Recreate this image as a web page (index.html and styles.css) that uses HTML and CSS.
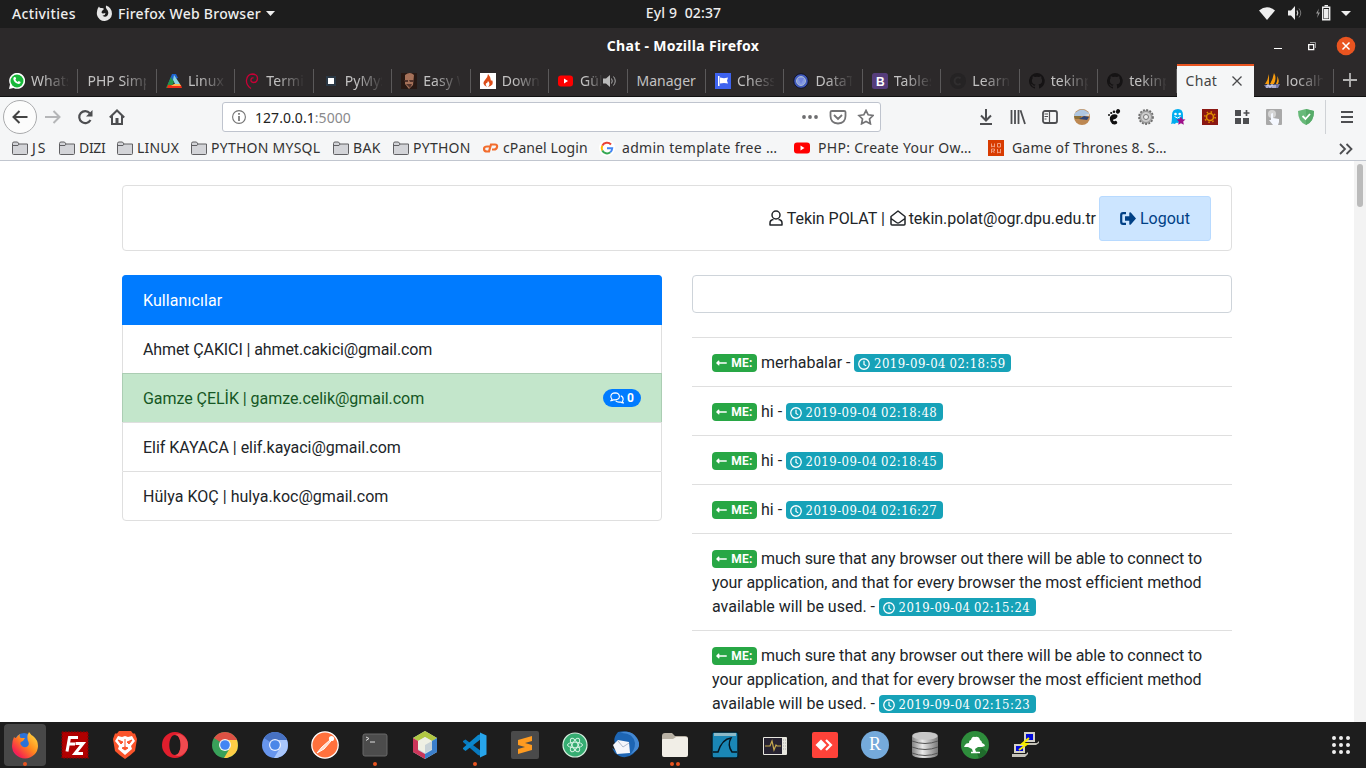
FILE: index.html
```html
<!DOCTYPE html>
<html lang="tr">
<head>
<meta charset="utf-8">
<title>Chat</title>
<link rel="stylesheet" href="styles.css">
</head>
<body>
<svg width="0" height="0" class="defs">
  <symbol id="folder" viewBox="0 0 16 14"><path d="M.5 12.500v-10q0-1.500 1.500-1.500h3.500l1.500 2h8.500v9.500q0 1-1 1h-13q-1 0-1-1z" fill="#d3d4d8" stroke="#606063"/><path d="M1 4.500h5l1-1.500" fill="none" stroke="#606063"/></symbol>
  <symbol id="arrow" viewBox="0 0 448 512"><path fill="currentColor" d="M134 220h302c7 0 12 5 12 12v48c0 7-5 12-12 12H134v46c0 22-26 33-41 17L7 273c-9-9-9-25 0-34l86-86c15-15 41-4 41 17z"/></symbol>
  <symbol id="clock" viewBox="0 0 16 16"><circle cx="8" cy="8" r="7" fill="none" stroke="currentColor" stroke-width="1.700"/><path d="M8 3.700V8.500l3 2" fill="none" stroke="currentColor" stroke-width="1.600"/></symbol>
  <symbol id="github" viewBox="0 0 16 16"><path fill="#151314" d="M8 0a8 8 0 0 0-2.500 15.600c.4.1.5-.2.5-.4v-1.500c-2.200.5-2.700-1-2.700-1-.4-.9-.9-1.200-.9-1.200-.7-.5.1-.5.1-.5.8.1 1.200.8 1.200.8.7 1.300 1.900.9 2.300.7.1-.5.3-.9.5-1.100-1.800-.2-3.600-.9-3.600-4 0-.9.3-1.600.8-2.100-.1-.2-.4-1 .1-2.100 0 0 .7-.2 2.200.8a7.600 7.600 0 0 1 4 0c1.500-1 2.200-.8 2.200-.8.4 1.100.2 1.900.1 2.100.5.6.8 1.300.8 2.200 0 3.100-1.900 3.700-3.700 3.900.3.300.6.800.6 1.500v2.200c0 .2.100.5.500.4A8 8 0 0 0 8 0z"/></symbol>
</svg>

<header class="topbar">
  <div class="top-left">
    <span class="activities">Activities</span>
    <svg class="fx" width="17" height="17" viewBox="0 0 17 17"><path d="M3 1.500Q3.500 3 5 3Q7 2.500 8 4L6 6Q4.800 8 7 8.500L9.500 8Q9 11 6.500 10.500Q9 13 11.500 10.500Q13.500 7 10.500 4Q9.500 2.500 10 .5Q16 2.500 16 9A7.600 7.600 0 0 1 1 10Q.3 5 3 1.500z" fill="#e6e6e6"/></svg>
    <span class="app">Firefox Web Browser</span>
    <svg width="9" height="5" viewBox="0 0 9 5"><path d="M0 0h9L4.500 5z" fill="#eee"/></svg>
  </div>
  <div class="top-date">Eyl 9&nbsp; 02:37</div>
  <div class="top-right">
    <svg width="16" height="13" viewBox="0 0 16 13"><path d="M0 3.500Q8-3 16 3.500L8 13z" fill="#eee"/></svg>
    <svg class="vol" width="16" height="14" viewBox="0 0 16 14"><path d="M1 4.500h3L8 0v14L4 9.500H1z" fill="#eee"/><path d="M10 4.500q1.500 2.500 0 5" stroke="#ccc" stroke-width="1.300" fill="none"/><path d="M12 2.500q3.500 4.500 0 9" stroke="#777" fill="none"/></svg>
    <svg class="bat" width="15" height="16" viewBox="0 0 15 16"><path d="M3 3.500L0 8.500h2L1 13l3-5.500H2z" fill="#999"/><path d="M6.700 2.200h7v12.600h-7z" fill="none" stroke="#eee" stroke-width="1.400"/><path d="M8 4h4.500v9.500H8zM8.500 0h3.500v1.500h-3.500z" fill="#eee"/></svg>
    <svg width="10" height="5" viewBox="0 0 10 5"><path d="M0 0h10L5 5z" fill="#eee"/></svg>
  </div>
</header>

<div class="titlebar">
  <div class="title">Chat - Mozilla Firefox</div>
  <svg class="winbtns" width="84" height="20" viewBox="0 0 84 20"><path d="M1 12.500h8" stroke="#fff"/><path d="M35.700 8.700h5v5h-5z" fill="none" stroke="#fff" stroke-width="1.300"/><path d="M37 6.500h5.500V12" fill="none" stroke="#999"/><circle cx="73" cy="10" r="9.300" fill="#e95420"/><path d="M69.500 6.500l7 7m0-7l-7 7" stroke="#fff" stroke-width="1.500"/></svg>
</div>

<div class="tabs">
  <div class="tab"><svg class="fav" viewBox="0 0 16 16"><path d="M0 16l1-4.500A8 8 0 1 1 4.500 15z" fill="#fff"/><circle cx="8" cy="8" r="6.500" fill="#18b83a"/><path d="M5.300 4l1.300.3.500 1.500-.7 1q.8 1.500 2.300 2.200l1-.9 2 1q0 2-2.200 2Q5 10 4.300 6 4.300 4.500 5.300 4z" fill="#fff"/></svg><span>WhatsApp</span></div>
  <div class="tab"><span class="wide">PHP Simple</span></div>
  <div class="tab"><svg class="fav" viewBox="0 0 16 16"><path d="M6 1h4l2 4-3 1-4 4-3 1z" fill="#1c62cd"/><path d="M8 2l6 9H9l-2-4z" fill="#8bd4e3"/><path d="M5 4l3 5-3 6H0z" fill="#269447"/><path d="M2 12h13l1 3H1z" fill="#f02b16"/><path d="M8 11h6l1 2H5z" fill="#ffb34b"/></svg><span>Linux M</span></div>
  <div class="tab"><svg class="fav" viewBox="0 0 16 16"><path d="M7 15.500Q2 12 2.500 7 3.500 1 8.500 1q5 .2 5 4.800Q13 9.500 9.500 9.500 6.500 9 7 6.500 7.500 4.500 9.500 5" stroke="#c70036" stroke-width="1.300" fill="none"/></svg><span>Termina</span></div>
  <div class="tab"><svg class="fav" viewBox="0 0 16 16"><path d="M3 3h10v10H3z" fill="#2b3946"/><path d="M5 5h6v6H5z" fill="#fff"/></svg><span>PyMySQL</span></div>
  <div class="tab"><svg class="fav" viewBox="0 0 16 16"><path d="M0 0h16v16H0z" fill="#281914"/><path d="M4 2q5-4 9 0l-1 10-4 4-4-5z" fill="#a67159"/><path d="M3 7h4v2H4zm5 0h5v2H9zM5 11h6l-2 4z" fill="#51332b"/></svg><span>Easy Way</span></div>
  <div class="tab"><svg class="fav" viewBox="0 0 16 16"><path d="M0 0h16v16H0z" fill="#fff"/><path d="M8 1q0 3-3 6-4 4 2 7-2-2-1-4 1 1 2-2 3 3 0 6 7-2 4-7l-1 1Q11 4 8 1z" fill="#dc4c19"/></svg><span>Download</span></div>
  <div class="tab"><svg class="fav" viewBox="0 0 16 16"><rect y="2.500" width="15" height="11" rx="3" fill="#f00"/><path d="M6 5.500v5L10 8z" fill="#fff"/></svg><span class="short">Gülş</span><svg class="sound" width="14" height="14" viewBox="0 0 14 14"><path d="M0 4.500h3L7 1v12L3 9.500H0z" fill="#bbb"/><path d="M8.500 4.500q1.500 2.500 0 5m2-7q3.500 4.500 0 9" stroke="#aaa" fill="none"/></svg></div>
  <div class="tab"><span class="wide full">Manager</span></div>
  <div class="tab"><svg class="fav" viewBox="0 0 16 16"><path d="M0 0h16v16H0z" fill="#3e63ef"/><path d="M3 3h1.500v10H3zm2 1.500l4 .7 4-.7-1 3.300 1 2.700-4-.5-4 .5z" fill="#fff"/></svg><span>Chess A</span></div>
  <div class="tab"><svg class="fav" viewBox="0 0 16 16"><circle cx="8" cy="8" r="7.300" fill="#4059bb" stroke="#101223"/><circle cx="8" cy="8" r="4.500" fill="#849ae5" stroke="#abc" /><path d="M5 5h6L8 11z" fill="#6f83dc"/></svg><span>DataTabl</span></div>
  <div class="tab"><svg class="fav" viewBox="0 0 16 16"><rect width="16" height="16" rx="2.500" fill="#563d7c"/><text x="4" y="12.500" class="bicon">B</text></svg><span>Tables·</span></div>
  <div class="tab"><svg class="fav" viewBox="0 0 16 16"><circle cx="8" cy="8" r="8" fill="#252324"/><path d="M10.500 5.500a3.500 3.500 0 1 0 0 5" stroke="#302e2f" stroke-width="2" fill="none"/></svg><span>Learn M</span></div>
  <div class="tab"><svg class="fav"><use href="#github"/></svg><span>tekinpo</span></div>
  <div class="tab"><svg class="fav"><use href="#github"/></svg><span>tekinpo</span></div>
  <div class="tab active"><span class="wide">Chat</span><svg class="close" width="10" height="10" viewBox="0 0 10 10"><path d="M.5.5l9 9m0-9l-9 9" stroke="#4a4a4d" stroke-width="1.300"/></svg></div>
  <div class="tab"><svg class="fav" viewBox="0 0 16 16"><path d="M5 1v10H1q3-4 4-10zm5-1q3 5 0 11H6q3-5 4-11zm3 3q3 4 1 8h-2q2-4 1-8z" fill="#f89c0e"/><path d="M0 12l16-1-2 4H2z" fill="#777baa"/><path d="M3 15v-3h2v2h2v-2h2v3m2-3v3" stroke="#dfe1f3" fill="none"/></svg><span>localho</span></div>
  <svg class="plus" width="14" height="14" viewBox="0 0 14 14"><path d="M7 0v14M0 7h14" stroke="#b5b4b4" stroke-width="1.800"/></svg>
</div>

<nav class="toolbar">
  <div class="navrow">
    <div class="back"><svg width="16" height="14" viewBox="0 0 16 14"><path d="M15.500 7H1.500M7.500 1l-6 6 6 6" stroke="#444" stroke-width="2" fill="none"/></svg></div>
    <svg class="fwd" width="16" height="14" viewBox="0 0 16 14"><path d="M0 7h14.500M8.500 1l6 6-6 6" stroke="#b5b6b8" stroke-width="2" fill="none"/></svg>
    <svg class="reload" width="16" height="16" viewBox="0 0 16 16"><path d="M12.800 4.200A6 6 0 1 0 13.500 11" stroke="#4d4e51" stroke-width="2.200" fill="none"/><path d="M15.500 1v6.500H9z" fill="#4d4e51"/></svg>
    <svg class="home" width="16" height="16" viewBox="0 0 16 16"><path d="M.8 8.500L8 1.500l7.200 7M3 7v8h10V7" stroke="#4d4e51" stroke-width="2" fill="none"/><path d="M6.500 9h3v6h-3z" fill="#4d4e51"/></svg>
    <div class="urlbar">
      <svg width="14" height="14" viewBox="0 0 14 14"><circle cx="7" cy="7" r="6.400" fill="none" stroke="#737373" stroke-width="1.100"/><path d="M7 6v5M7 3v1.800" stroke="#737373" stroke-width="1.700"/></svg>
      <span class="url">127.0.0.1<i>:5000</i></span>
      <svg class="page-actions" width="74" height="16" viewBox="0 0 74 16"><g fill="#6d6d6f"><circle cx="4" cy="8" r="1.900"/><circle cx="10" cy="8" r="1.900"/><circle cx="16" cy="8" r="1.900"/></g><path d="M32 2h12q1.500 0 1.500 1v4q0 7-7.500 7.500Q30.500 14 30.500 7V3q0-1 1.500-1zM34 6l4 4 4-4" stroke="#737375" stroke-width="1.800" fill="none"/><path d="M66 1.500l2.200 4.300 4.800.7-3.500 3.500.9 4.800-4.400-2.300-4.400 2.300.9-4.800L59 6.500l4.800-.7z" stroke="#737375" stroke-width="1.700" fill="none"/></svg>
    </div>
    <div class="tools">
      <svg class="t" viewBox="0 0 16 16"><path d="M8 0v11M3 6.500l5 5 5-5M2 15h12" stroke="#4d4e51" stroke-width="2" fill="none"/></svg>
      <svg class="t" viewBox="0 0 16 16"><path d="M1.500 1v14M5 1v14M8.500 1v14M10.500 1.200L15 15" stroke="#4d4e51" stroke-width="1.800" fill="none"/></svg>
      <svg class="t" viewBox="0 0 16 16"><rect x="1" y="2" width="14" height="12" rx="2" stroke="#4d4e51" stroke-width="1.800" fill="none"/><path d="M7.500 2v12M2.500 5h3.500M2.500 7.500h3.500M2.500 10h2" stroke="#4d4e51" stroke-width="1.200"/></svg>
      <svg class="t" viewBox="0 0 16 16"><circle cx="8" cy="8" r="8" fill="#bd8852"/><path d="M1 4q7-7 14 0v3H0z" fill="#aec6e1"/><path d="M0 7h7v3H1z" fill="#8b6f37"/><path d="M5 10l5-3 5 1-2 3z" fill="#304575"/><path d="M10 6l5-1v2z" fill="#e9ded0"/></svg>
      <svg class="t" viewBox="0 0 16 16"><path d="M11.500 6.500Q10 4.500 6.500 5.500 2.500 7.500 4.500 12.500 6 16 9 15.500q3-.7 2-2.700-1-1.500-2.800-.6-1.700-.2-.9-1.700 4.400-1 4.200-4z" fill="#111"/><ellipse cx="12" cy="2.400" rx="2" ry="2.300" transform="rotate(25 12 2.400)" fill="#111"/><circle cx="8" cy="2.800" r="1.300" fill="#111"/><circle cx="5.200" cy="4" r="1.100" fill="#111"/><circle cx="3" cy="6" r="1" fill="#111"/></svg>
      <svg class="t" viewBox="0 0 16 16"><circle cx="8" cy="8" r="7" fill="#b5b5b5" stroke="#6d6d6d" stroke-width="1.800" stroke-dasharray="1.900 1.400"/><circle cx="8" cy="8" r="5.500" fill="#ccc" stroke="#929292"/><circle cx="8" cy="8" r="2.500" fill="#eee" stroke="#777"/></svg>
      <svg class="t" viewBox="0 0 16 16"><path d="M2 6q0-6 6-6 5 0 5 6v9q-4-3-5-1-2-1-3 1-2-1-4 0 1-2 1-9z" fill="#00aef0"/><circle cx="5.500" cy="5" r="1.300" fill="#fff"/><circle cx="9.700" cy="5" r="1.300" fill="#fff"/><path d="M4.500 7.500q3 3 6 0" stroke="#fff" fill="none"/><path d="M11 7.500l1.300 2.800 3.200.3-2.300 2 .7 3.200-2.900-1.600-2.800 1.600.6-3.200-2.300-2 3.100-.3z" fill="#a0108a"/></svg>
      <svg class="t" viewBox="0 0 16 16"><path d="M0 0h16v16H0z" fill="#8b1813"/><circle cx="8" cy="8" r="3.500" fill="none" stroke="#df8d00" stroke-width="1.600"/><circle cx="8" cy="8" r="5.200" fill="none" stroke="#df8d00" stroke-width="1.600" stroke-dasharray="1.500 2.580"/></svg>
      <svg class="t" viewBox="0 0 16 16"><path d="M1 1h6v6H1zm0 8h6v6H1zm8 0h6v6H9z" fill="#4d4e51"/><path d="M12.500 1v6m-3-3h6" stroke="#4d4e51" stroke-width="1.700"/></svg>
      <svg class="t" viewBox="0 0 16 16"><rect width="16" height="16" rx="1" fill="#a9a9a9"/><circle cx="6" cy="5" r="4" fill="#d4d4d4"/><path d="M5 5q2-2 2 0v4l6 1v3l-1 3H7l-4-5 2 0z" fill="#f5f8ff"/></svg>
      <svg class="t" viewBox="0 0 16 16"><path d="M8 0l8 2q0 11-8 14Q0 13 0 2z" fill="#67b979"/><path d="M8 0l8 2q0 11-8 14z" fill="#57ab69"/><path d="M4.500 7l3 3 4.500-5" stroke="#fff" stroke-width="1.800" fill="none"/></svg>
    </div>
    <div class="burger"><svg width="12" height="12" viewBox="0 0 12 12"><path d="M0 1h12M0 6h12M0 11h12" stroke="#4d4e51" stroke-width="1.800"/></svg></div>
  </div>
  <div class="bookmarks">
    <span class="bm w47"><svg class="folder"><use href="#folder"/></svg><b class="f0">JS</b></span>
    <span class="bm w58"><svg class="folder"><use href="#folder"/></svg><b class="f1">DIZI</b></span>
    <span class="bm w74"><svg class="folder"><use href="#folder"/></svg><b class="f2">LINUX</b></span>
    <span class="bm w142"><svg class="folder"><use href="#folder"/></svg><b class="f3">PYTHON MYSQL</b></span>
    <span class="bm w60"><svg class="folder"><use href="#folder"/></svg><b class="f4">BAK</b></span>
    <span class="bm w90"><svg class="folder"><use href="#folder"/></svg><b class="f5">PYTHON</b></span>
    <span class="bm w116"><svg class="site" viewBox="0 0 16 16"><path d="M7 6.500H4Q1 6.500 1 9t3 2.500h2L8 4.500h4q2.500 0 2 2.500t-3 2.500H9" stroke="#f26d2e" stroke-width="2.200" fill="none"/></svg><b class="f6">cPanel Login</b></span>
    <span class="bm gap w195"><svg class="site" viewBox="0 0 16 16"><circle cx="8" cy="8" r="8" fill="#fff"/><path d="M12 4.500A5.200 5.200 0 0 0 3.300 5.700" stroke="#ea4335" stroke-width="2" fill="none"/><path d="M3.300 5.700a5.200 5.200 0 0 0 0 4.800" stroke="#fbbc05" stroke-width="2" fill="none"/><path d="M3.300 10.500a5.200 5.200 0 0 0 8 1.700" stroke="#34a853" stroke-width="2" fill="none"/><path d="M11.300 12.200Q13 11 13.200 8.300H8" stroke="#4285f4" stroke-width="2" fill="none"/></svg><b class="f7">admin template free …</b></span>
    <span class="bm gap w194"><svg class="site" viewBox="0 0 16 16"><rect x="0" y="2.500" width="16" height="11" rx="3" fill="#f00"/><path d="M6.500 5.500v5l4-2.500z" fill="#fff"/></svg><b class="f8">PHP: Create Your Ow…</b></span>
    <span class="bm gap"><svg class="site" viewBox="0 0 16 16"><path d="M0 0h16v16H0z" fill="#d83b01"/><path d="M3.500 3.500V7l1.500-1 1.500 1V3.500m3 0h3V7h-3zM3.500 13V9h3v2l-2 0 2 2m3-4v4l1.500-1 1.500 1V9" stroke="#f4a88f" stroke-width=".9" fill="none"/></svg><b class="f9">Game of Thrones 8. S…</b></span>
    <svg class="more" width="14" height="12" viewBox="0 0 14 12"><path d="M1 1l5 5-5 5m6.500-10l5 5-5 5" stroke="#4d4e51" stroke-width="1.800" fill="none"/></svg>
  </div>
</nav>

<main class="page">
  <div class="container">
    <div class="userbar">
      <span class="who"><svg class="ic-user" viewBox="0 0 14 16"><path d="M4.500 9.500Q1 10 1 13v2h12v-2q0-3-3.500-3.500" fill="none" stroke="currentColor" stroke-width="1.500" stroke-linejoin="round"/><circle cx="7" cy="5" r="4" fill="none" stroke="currentColor" stroke-width="1.500"/></svg> Tekin POLAT | <svg class="ic-mail" viewBox="0 0 16 16"><path d="M1 6.500L8 1l7 5.500V14q0 1-1 1H2q-1 0-1-1zM1 8.500l5.500 4q1.500 1 3 0l5.500-4" fill="none" stroke="currentColor" stroke-width="1.500" stroke-linejoin="round"/></svg> tekin.polat@ogr.dpu.edu.tr</span>
      <a class="logout"><svg class="ic-out" viewBox="0 0 16 13"><path d="M6 1.200H3q-1.800 0-1.800 1.800v7q0 1.800 1.800 1.800h3" fill="none" stroke="currentColor" stroke-width="2.200"/><path d="M5 4.300h4.300V.8q.5-1 1.500-.3L16 6.500l-5.200 6q-1 .6-1.500-.3V8.700H5z" fill="currentColor"/></svg> Logout</a>
    </div>
    <div class="cols">
      <ul class="users">
        <li class="head">Kullanıcılar</li>
        <li class="tight">Ahmet ÇAKICI | ahmet.cakici@gmail.com</li>
        <li class="sel">Gamze ÇELİK | gamze.celik@gmail.com<span class="pill"><svg class="ic-chat" viewBox="0 0 18 16"><path d="M1 11.500Q2.500 10 2 9 .8 7.500.8 6 1 1.500 6.500 1.200 12 1.500 12.200 6 12 10.300 6.500 10.500L4.500 10.300Q3 11.500 1 11.500zM14 5.200q3.200 1 3.200 4.300 0 1.500-1 2.700 0 1 1.300 2.300-2.200 0-3.700-1.200-4.500.8-6.500-1.500" fill="none" stroke="currentColor" stroke-width="1.500"/></svg> 0</span></li>
        <li class="mid">Elif KAYACA | elif.kayaci@gmail.com</li>
        <li>Hülya KOÇ | hulya.koc@gmail.com</li>
      </ul>
      <section class="chat">
        <input class="msg" type="text">
        <ul class="log">
          <li><span class="me"><svg><use href="#arrow"/></svg> ME:</span> merhabalar - <span class="time"><svg><use href="#clock"/></svg> 2019-09-04 02:18:59</span></li>
          <li><span class="me"><svg><use href="#arrow"/></svg> ME:</span> hi - <span class="time"><svg><use href="#clock"/></svg> 2019-09-04 02:18:48</span></li>
          <li><span class="me"><svg><use href="#arrow"/></svg> ME:</span> hi - <span class="time"><svg><use href="#clock"/></svg> 2019-09-04 02:18:45</span></li>
          <li><span class="me"><svg><use href="#arrow"/></svg> ME:</span> hi - <span class="time"><svg><use href="#clock"/></svg> 2019-09-04 02:16:27</span></li>
          <li><span class="me"><svg><use href="#arrow"/></svg> ME:</span> <span class="long">much sure that any browser out there will be able to connect to your application, and that for every browser the most efficient method </span>available will be used. - <span class="time"><svg><use href="#clock"/></svg> 2019-09-04 02:15:24</span></li>
          <li><span class="me"><svg><use href="#arrow"/></svg> ME:</span> <span class="long">much sure that any browser out there will be able to connect to your application, and that for every browser the most efficient method </span>available will be used. - <span class="time"><svg><use href="#clock"/></svg> 2019-09-04 02:15:23</span></li>
        </ul>
      </section>
    </div>
  </div>
  <div class="scroll"><div class="thumb"></div></div>
</main>

<footer class="dock">
  <div class="app-slot on one"><svg viewBox="0 0 28 28"><defs><linearGradient id="ff" x1="1" y1="0" x2="0" y2="1"><stop offset="0" stop-color="#ffe94a"/><stop offset=".45" stop-color="#ff8a1c"/><stop offset=".8" stop-color="#f5234f"/><stop offset="1" stop-color="#d91ca0"/></linearGradient></defs><circle cx="13" cy="11.500" r="9.500" fill="#2b72d8"/><path d="M3 6q1 1 2 1 2-3 4-4-1 3 1 4h4l-2 3q-4 1-2 4 3 4 7 1 1.500-2 .5-4-2.500-5 .5-10 2 3 4 4 5 4 5 10A13 12.500 0 0 1 1 15Q1 10 3 6z" fill="url(#ff)"/></svg></div>
  <div class="app-slot"><svg viewBox="0 0 28 28"><path d="M1 1h26v26H1z" fill="#b00000" stroke="#850000" stroke-width="1.500" stroke-dasharray="1.500 1.500"/><path d="M6 20.500L8.500 6.500H17M7.500 13H14M14.500 12.500H22L14 22.500h8" fill="none" stroke="#fff" stroke-width="3"/></svg></div>
  <div class="app-slot"><svg viewBox="0 0 28 28"><path d="M8 0h12l2 2.500h2L26 8l-2 12q-4 4-10 8-6-4-10-8L2 8l2-5.500h2z" fill="#fb542b"/><path d="M7 5l4 1 3-1 3 1 4-1 3 5-4 5 1 3-7 6-7-6 1-3-4-5z" fill="#fff"/><path d="M7 9l5 2-2 2zM21 9l-5 2 2 2zM11 17l3-1 3 1-3 2zM14 8v8" fill="#fb542b" stroke="#fb542b"/></svg></div>
  <div class="app-slot"><svg viewBox="0 0 28 28"><path fill-rule="evenodd" d="M14 1a13 13 0 1 1 0 26 13 13 0 0 1 0-26zm0 3c-7.500 0-7.500 20 0 20s7.500-20 0-20z" fill="#e11e2d"/><path d="M14 4c7.500 0 7.500 20 0 20q3 2 7 0 6-4 6-10t-6-10q-4-2-7 0z" fill="#f04a4f"/></svg></div>
  <div class="app-slot"><svg viewBox="0 0 28 28"><circle cx="14" cy="14" r="13" fill="#39a15a"/><path d="M14 14L3 7q4-6 11-6t11 6q1 1 1 2H14z" fill="#dd5144"/><path d="M14 9h12q4 14-10 18h-3l6-10z" fill="#ffcd46"/><circle cx="14" cy="14" r="6" fill="#f3f3f3"/><circle cx="14" cy="14" r="4.800" fill="#4285f4"/></svg></div>
  <div class="app-slot"><svg viewBox="0 0 28 28"><circle cx="14" cy="14" r="13" fill="#6795ed"/><path d="M14 14L3 7q4-6 11-6t11 6q1 1 1 2H14z" fill="#4771c2"/><path d="M14 9h12q4 14-10 18h-3l6-10z" fill="#a9c6fb"/><circle cx="14" cy="14" r="6" fill="#e9f0ff"/><circle cx="14" cy="14" r="4.800" fill="#4b87e8"/></svg></div>
  <div class="app-slot"><svg viewBox="0 0 28 28"><circle cx="14" cy="14" r="13.200" fill="#ff713d" stroke="#fff" stroke-width="1.300"/><path d="M19 9l-8 7-5 6 7-4 7-8" fill="#ffd8c8" stroke="#fff"/><circle cx="20.500" cy="7.500" r="2.600" fill="#fff"/></svg></div>
  <div class="app-slot one"><svg viewBox="0 0 28 28"><rect x="2" y="3" width="24" height="22" rx="2" fill="#4c4c4c" stroke="#696969"/><path d="M5 6l3 1.500L5 9.500M9 11h5" stroke="#ddd" fill="none"/></svg></div>
  <div class="app-slot"><svg viewBox="0 0 28 28"><path d="M14 0l12 7v14l-12 7-12-7V7z" fill="#c6d9e3"/><path d="M14 0l12 7-5 3-7-4-7 4-5-3z" fill="#b1c843"/><path d="M2 7l5 3v9l7 4v5L2 21z" fill="#cb365a"/><path d="M26 7v14l-12 7v-5l7-4v-9z" fill="#3b7fcb"/><path d="M14 6l7 4v8l-7 4-7-4v-8z" fill="#eef0e3"/><path d="M14 14l7-4v8l-7 4z" fill="#c7d2d6"/></svg></div>
  <div class="app-slot one"><svg viewBox="0 0 28 28"><path d="M2 10l2.500-1.500L20 20v5l-3-1L2 11z" fill="#087abf"/><path d="M2 18l2.500 2L20 8V3l-3 1L2 17z" fill="#0b87cc"/><path d="M19 1.500l6.500 3v19l-6.500 3z" fill="#27a5eb"/></svg></div>
  <div class="app-slot"><svg viewBox="0 0 28 28"><rect width="28" height="28" rx="2" fill="#4a4a4a"/><path d="M7 9l14-4v5l-7 2 7 2v5L7 23v-5l7-2-7-2z" fill="#ff9b20"/></svg></div>
  <div class="app-slot"><svg viewBox="0 0 28 28"><circle cx="14" cy="14" r="12" fill="#36ad72" stroke="#d6eedf" stroke-width="1.200"/><g fill="none" stroke="#d5f3e4"><ellipse cx="14" cy="14" rx="7.500" ry="2.800"/><ellipse cx="14" cy="14" rx="7.500" ry="2.800" transform="rotate(60 14 14)"/><ellipse cx="14" cy="14" rx="7.500" ry="2.800" transform="rotate(120 14 14)"/></g></svg></div>
  <div class="app-slot"><svg viewBox="0 0 28 28"><path d="M7 1q13-3 18 6 4 9-3 16-9 7-18-1l-3-5 5 3-3-5 3 1Q0 9 7 1z" fill="#1d65b3"/><path d="M9 2q13-1 15 10 0 8-6 12 15-6 8-17-6-9-17-5z" fill="#4388d3"/><path d="M2 14l5-5 11 2 1 11-13 1z" fill="#f4f6fb"/><path d="M7 10l5 6 6-4" stroke="#adb9cb" fill="none"/></svg></div>
  <div class="app-slot two"><svg viewBox="0 0 28 28"><path d="M1 5q0-3 3-3h7l3 3h10q3 0 3 3v5H1z" fill="#b8b1a4"/><path d="M1 9q0-1 1-1h10l3-2h10q2 0 2 2v16q0 2-2 2H3q-2 0-2-2z" fill="#f1eee7"/></svg></div>
  <div class="app-slot"><svg viewBox="0 0 28 28"><rect x="1" y="1" width="26" height="26" rx="2" fill="#1a87b6" stroke="#091c25" stroke-width="1.500"/><path d="M3 2h22v3H3z" fill="#8dbac8"/><path d="M2 21h5q4-13 13-14-4 7 1 14h5" stroke="#061721" stroke-width="1.500" fill="none"/></svg></div>
  <div class="app-slot"><svg viewBox="0 0 28 28"><rect x="2" y="6" width="24" height="18" rx="1" fill="#e8e7df"/><path d="M3 7h18v16H3z" fill="#272331"/><path d="M4 15h5l2-5 2 9 2-5 1 1h4" stroke="#c6a94f" stroke-width="1.200" fill="none"/><path d="M22 9h3m-3 3h3m-3 3h3m-3 3h3" stroke="#aaa" stroke-dasharray="1 1"/></svg></div>
  <div class="app-slot"><svg viewBox="0 0 28 28"><rect x="1" y="1" width="26" height="26" rx="2" fill="#ff4239"/><path d="M4.500 14l5.500-5.500 5.500 5.500-5.500 5.500z" fill="#fff"/><path d="M15 9l5 5-5 5" stroke="#fff" stroke-width="2.200" fill="none"/></svg></div>
  <div class="app-slot"><svg viewBox="0 0 28 28"><circle cx="14" cy="14" r="14" fill="#75aadb"/><text x="8" y="19" class="ricon">R</text></svg></div>
  <div class="app-slot"><svg viewBox="0 0 28 28"><defs><linearGradient id="dbg"><stop stop-color="#828282"/><stop offset=".4" stop-color="#e9e9e9"/><stop offset="1" stop-color="#777"/></linearGradient></defs><path d="M1 5q0-4 13-4t13 4v18q0 4-13 4T1 23z" fill="url(#dbg)"/><ellipse cx="14" cy="5" rx="12.500" ry="3.800" fill="#c7c7c7"/><path d="M1 10q13 5 26 0M1 16q13 5 26 0M1 22q13 5 26 0" stroke="#555" fill="none"/></svg></div>
  <div class="app-slot"><svg viewBox="0 0 28 28"><circle cx="14" cy="14" r="14" fill="#2e8d3c"/><path d="M16 22l5-5 5 4q-3 5-8 6.500z" fill="#206c2c"/><path d="M4 14q1-2 4-2 0-3 2-3 1-4 4-3 4-1 5 3 2 1 2 3 3 1 3 3l-3 1h-4l-3 2 1 3h-3l-1-3-4-2-4 0z" fill="#fff"/><path d="M10 21.500h9" stroke="#fff" stroke-width="1.500"/></svg></div>
  <div class="app-slot"><svg viewBox="0 0 28 28"><path d="M13 1h11v10H13zM3 13h11v9H3z" fill="#d3d0c7"/><path d="M15 3h7v6h-7zM5 15h7v5H5z" fill="#0009d9"/><path d="M13 12h13l2-2v2l-3 2H13zM1 23h14l2-2v2l-3 3H1z" fill="#c4c1b8"/><path d="M18 7l-7 6h5l-8 6" fill="none" stroke="#f6ed00" stroke-width="2"/></svg></div>
  <svg class="grid" width="18" height="18" viewBox="0 0 18 18"><g stroke="#eee" stroke-width="4" stroke-linecap="round"><path d="M2 2h.01M9 2h.01M16 2h.01M2 9h.01M9 9h.01M16 9h.01M2 16h.01M9 16h.01M16 16h.01"/></g></svg>
</footer>
</body>
</html>
```
FILE: styles.css
```css
* { box-sizing: border-box; }
body { margin: 0; width: 1366px; height: 768px; overflow: hidden; display: flex; flex-direction: column; background: #fff; font-family: "Noto Sans", "Open Sans", sans-serif; font-size: 14px; }
svg { flex: none; }
.defs { position: absolute; }
ul { list-style: none; margin: 0; padding: 0; }

.topbar { height: 28px; flex: none; background: #1d1d1d; color: #eee; display: grid; grid-template-columns: 1fr auto 1fr; align-items: center; font-weight: 500; }
.top-left { display: flex; align-items: center; padding: 0 0 2px 12px; }
.activities { width: 84px; letter-spacing: .35px; }
.app { width: 143px; margin-left: 5px; margin-right: 5px; white-space: nowrap; letter-spacing: .27px; }
.top-date { padding: 0 0 3px 1px; letter-spacing: .15px; }
.top-right { display: flex; align-items: center; justify-content: flex-end; padding: 0 15px 2px 0; }
.vol { margin-left: 12px; }
.bat { margin: 0 10px 0 13px; }

.titlebar { height: 36px; flex: none; background: #2c292a; color: #fff; display: grid; grid-template-columns: 1fr auto 1fr; align-items: center; }
.title { grid-column: 2; font-weight: 700; letter-spacing: .3px; padding-bottom: 2px; }
.winbtns { justify-self: end; margin-right: 9px; }

.tabs { height: 33px; flex: none; background: #2c292a; border-bottom: 1px solid #111; display: flex; }
.tab { width: 78.45px; flex: none; height: 33px; display: flex; align-items: center; padding: 0 10px 0 9px; position: relative; color: #c3c2c2; }
.tab::after { content: ""; position: absolute; right: 0; top: 5px; width: 1px; height: 24px; background: #5b595a; }
.tab .fav { width: 16px; height: 16px; margin-right: 6px; }
.tab span { width: 37px; overflow: hidden; white-space: nowrap; letter-spacing: .1px; -webkit-mask-image: linear-gradient(90deg, #000 30%, transparent 105%); mask-image: linear-gradient(90deg, #000 30%, transparent 105%); }
.tab span.wide { width: 59px; letter-spacing: 0; -webkit-mask-image: linear-gradient(90deg, #000 60%, transparent 110%); mask-image: linear-gradient(90deg, #000 60%, transparent 110%); }
.tab span.full { width: 60px; -webkit-mask-image: none; mask-image: none; }
.tab span.short { width: 22px; }
.sound { margin-left: 1px; }
.tab.active { background: #f5f6f7; color: #444; border-top: 2px solid #e95420; width: 77.5px; margin-right: 1px; }
.tab.active::after { display: none; }
.tab.active span.wide { width: 46px; padding-bottom: 2px; letter-spacing: .3px; -webkit-mask-image: none; mask-image: none; }
.close { margin-bottom: 2px; }
.plus { margin: 9px 0 0 9px; }
.bicon { font: 700 12px "Liberation Sans", sans-serif; fill: #fff; }
.ricon { font: 18px "Liberation Serif", serif; fill: #fff; }

.toolbar { height: 64px; flex: none; background: #f5f6f7; border-bottom: 1px solid #c1c6cf; }
.navrow { height: 40px; display: flex; align-items: center; padding-left: 3px; }
.back { width: 34px; height: 34px; border: 1px solid #aaabad; border-radius: 50%; background: #fcfcfc; display: flex; align-items: center; justify-content: center; }
.fwd { margin-left: 8px; }
.reload { margin-left: 16px; }
.home { margin-left: 16px; }
.urlbar { width: 659px; height: 30px; margin-left: 97px; border: 1px solid #bfc4ce; border-radius: 3px; background: #fff; display: flex; align-items: center; padding: 0 6px 0 9px; }
.url { margin-left: 9px; color: #222; letter-spacing: .05px; }
.url i { font-style: normal; color: #8a8a8c; }
.page-actions { margin-left: auto; }
.tools { display: flex; gap: 16px; margin-left: 97px; }
.t { width: 16px; height: 16px; }
.burger { margin-left: 11px; border-left: 1px solid #cfd2d6; height: 34px; display: flex; align-items: center; padding-left: 15px; }
.bookmarks { height: 23px; display: flex; align-items: center; padding-left: 12px; color: #333; }
.bm { display: flex; align-items: center; white-space: nowrap; padding-bottom: 2px; flex: none; }
.bm b { font-weight: 400; margin-left: 4px; }
.bm.gap b { margin-left: 8px; }
.bm.w195 b { margin-left: 7px; }
.f0 { letter-spacing: 2px; }
.f1 { letter-spacing: -.3px; }
.f2 { letter-spacing: .2px; }
.f3 { letter-spacing: .25px; }
.f4 { letter-spacing: .4px; }
.f5 { letter-spacing: .25px; }
.f6 { letter-spacing: .1px; }
.f7 { letter-spacing: .3px; }
.f8 { letter-spacing: .3px; }
.f9 { letter-spacing: .17px; }
.folder { width: 16px; height: 14px; }
.site { width: 16px; height: 16px; }
.w47 { width: 47px; }
.w58 { width: 58px; }
.w60 { width: 60px; }
.w74 { width: 74px; }
.w90 { width: 90px; }
.w116 { width: 116px; }
.w142 { width: 142px; }
.w194 { width: 194px; }
.w195 { width: 195px; }
.more { margin: 0 13px 0 auto; }

.page { height: 561px; flex: none; display: flex; overflow: hidden; background: #fff; font-family: Roboto, sans-serif; font-size: 16px; line-height: 24px; color: #212529; }
.container { width: 1354px; padding: 24px 122px 0; }
.userbar { height: 66px; border: 1px solid #dfdfdf; border-radius: 4px; display: flex; justify-content: flex-end; align-items: center; padding-right: 20px; }
.who { margin-right: 3px; padding-top: 2px; letter-spacing: -.03px; }
.who svg { vertical-align: -2px; height: 16px; }
.ic-user { width: 14px; }
.ic-mail { width: 16px; margin-left: 1px; margin-right: -1px; }
.logout { width: 112px; height: 45px; border: 1px solid #b8daff; border-radius: 3px; background: #cce5ff; color: #004085; padding: 10px 20px; white-space: nowrap; }
.ic-out { width: 16px; height: 13px; vertical-align: -1px; }
.cols { display: grid; grid-template-columns: 540px 540px; gap: 30px; margin-top: 24px; align-items: start; }
.users li { border: 1px solid #dfdfdf; border-bottom: 0; height: 49px; padding: 13px 20px 11px; display: flex; justify-content: space-between; align-items: center; }
.users li.head { height: 50px; padding: 12px 20px; background: #007bff; border-color: #007bff; color: #fff; border-radius: 4px 4px 0 0; letter-spacing: .07px; }
.users li.tight { letter-spacing: -.11px; }
.users li.mid { letter-spacing: -.03px; }
.users li.head + li { border-top: 0; height: 48px; }
.users li.sel { background: #c3e6cb; border-color: #abcdb3; color: #155724; letter-spacing: -.05px; }
.users li:last-child { border-bottom: 1px solid #dfdfdf; height: 50px; border-radius: 0 0 4px 4px; letter-spacing: .03px; }
.pill { background: #007bff; color: #fff; border-radius: 10px; height: 18px; width: 38px; font-weight: 700; font-size: 12px; line-height: 19px; padding: 0 7px; margin-top: -2px; white-space: nowrap; }
.ic-chat { width: 14px; height: 12px; vertical-align: -2px; }
.msg { display: block; width: 540px; height: 38px; border: 1px solid #ced4da; border-radius: 4px; background: #fff; margin: 0 0 24px; }
.log li { border-top: 1px solid #dfdfdf; padding: 13px 20px 11px; }
.long { letter-spacing: -.07px; }
.me, .time { display: inline-block; height: 18px; border-radius: 4px; color: #fff; font-size: 12px; line-height: 19px; vertical-align: top; margin-top: 3px; padding: 0 4px; white-space: nowrap; }
.me { background: #28a745; font-weight: 700; width: 45px; letter-spacing: .25px; }
.me svg { width: 11px; height: 12px; margin-right: 1px; vertical-align: -2px; }
.time { background: #17a2b8; width: 157px; font-family: "DejaVu Serif Condensed", "DejaVu Serif", serif; font-size: 13px; letter-spacing: .45px; word-spacing: -.6px; }
.time svg { width: 12px; height: 12px; vertical-align: -2px; }
.scroll { width: 12px; background: #f3f3f3; padding: 3px 3px; }
.thumb { width: 6px; height: 43px; border-radius: 3px; background: #bbb; }

.dock { height: 46px; flex: none; background: #1d1d1d; display: flex; align-items: flex-start; padding: 2px 0 0 4px; }
.app-slot { width: 42px; height: 42px; margin-right: 8px; flex: none; border-radius: 4px; display: flex; align-items: center; justify-content: center; position: relative; }
.app-slot svg { width: 28px; height: 28px; }
.app-slot.on { background: #484848; }
.one::after, .two::after { content: ""; position: absolute; bottom: 0; left: 19px; width: 4px; height: 4px; border-radius: 50%; background: #e95420; }
.two::after { left: 16px; box-shadow: 6px 0 0 #e95420; }
.grid { margin: 12px 16px 0 auto; }
```
